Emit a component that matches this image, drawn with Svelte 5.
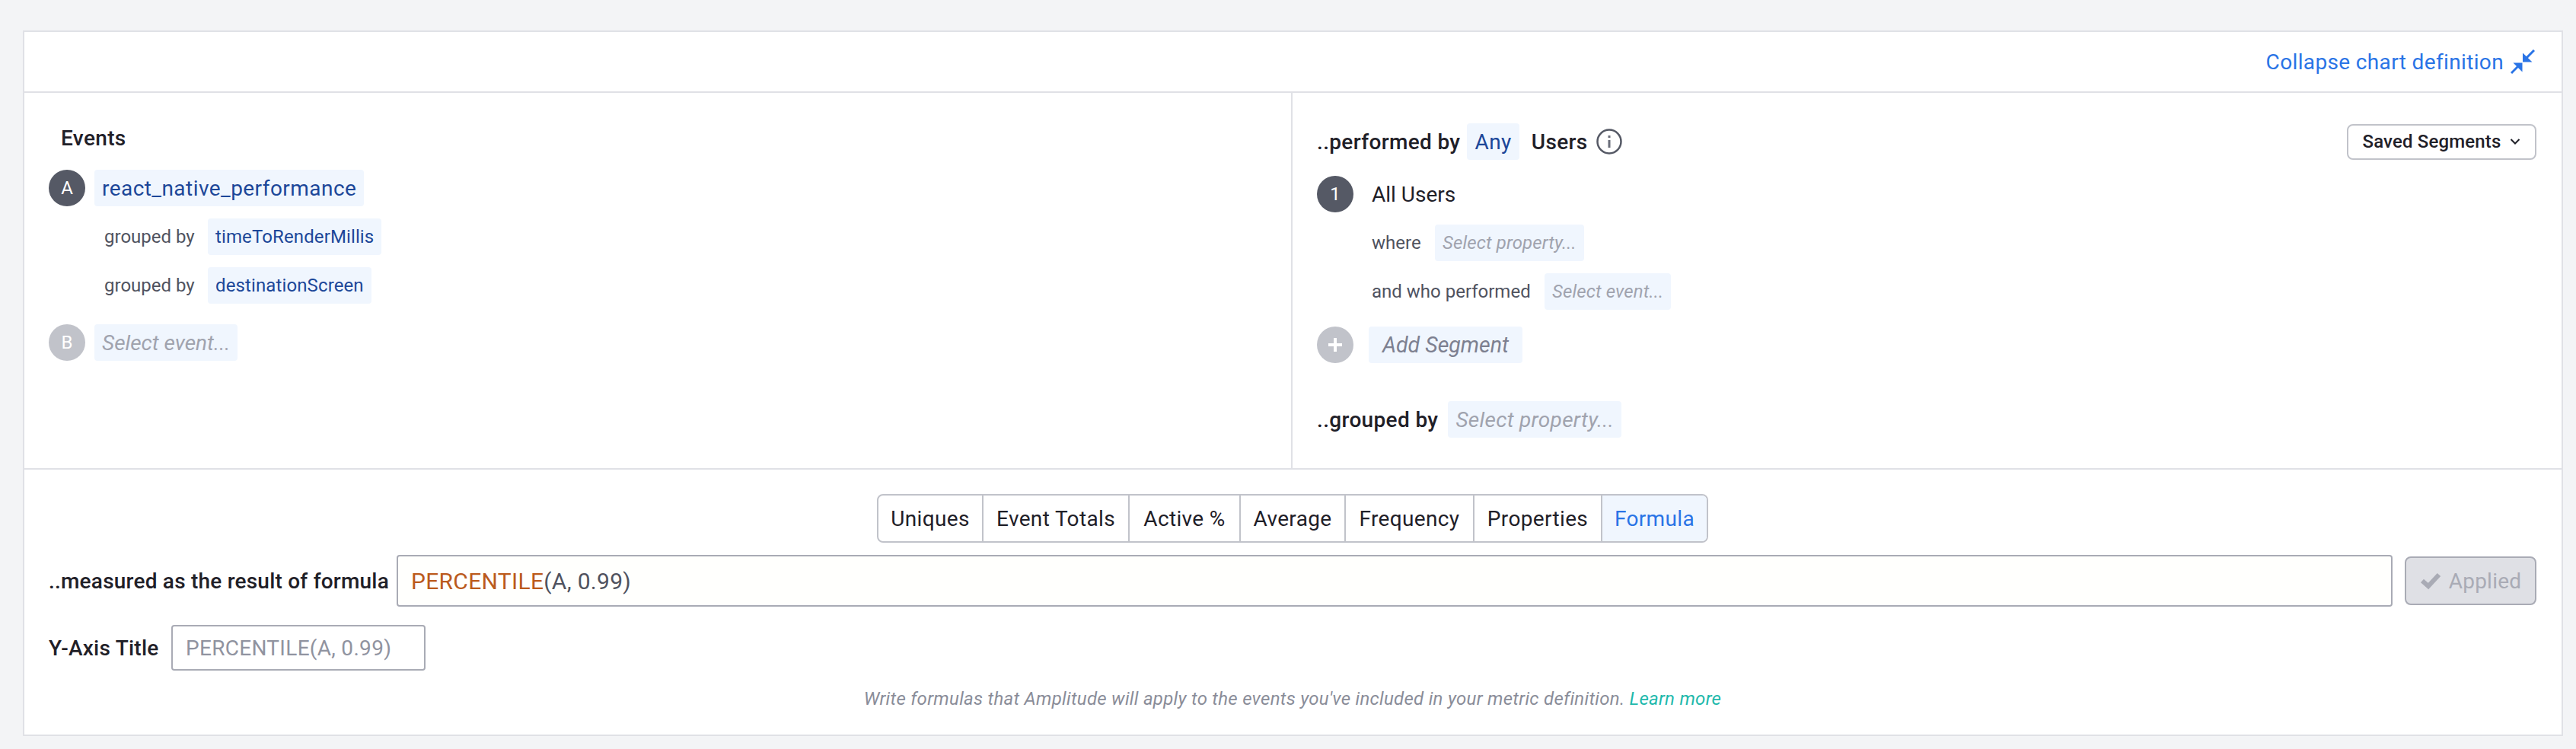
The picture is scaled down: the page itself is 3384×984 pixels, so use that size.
<script>
  const modes = ["Uniques", "Event Totals", "Active %", "Average", "Frequency", "Properties", "Formula"];
</script>

<div class="card">
  <div class="top-bar">
    <span class="collapse">Collapse chart definition</span>
    <svg class="collapse-icon" viewBox="0 0 32 32" width="32" height="32">
      <path d="M16 4.5 L28.5 16.5 H16 Z M3.5 17.5 H15.5 V29.5 Z" fill="#2a74e6" />
      <path d="M31 1 L21 11 M1 31 L11 21" fill="none" stroke="#2a74e6" stroke-width="3" />
    </svg>
  </div>

  <div class="builder">
    <div class="events">
      <div class="title">Events</div>
      <div class="row">
        <span class="badge">A</span>
        <span class="pill value big">react_native_performance</span>
      </div>
      <div class="row sub">
        <span class="muted">grouped by</span>
        <span class="pill value">timeToRenderMillis</span>
      </div>
      <div class="row sub">
        <span class="muted">grouped by</span>
        <span class="pill value">destinationScreen</span>
      </div>
      <div class="row next">
        <span class="badge off">B</span>
        <span class="pill holder big">Select event...</span>
      </div>
    </div>

    <div class="segments">
      <div class="seg-head">
        <span class="strong">..performed by</span>
        <span class="pill value big any">Any</span>
        <span class="strong users">Users</span>
        <svg class="info" viewBox="0 0 34 34" width="34" height="34">
          <circle cx="17" cy="17" r="15.5" fill="none" stroke="#555965" stroke-width="2.5" />
          <rect x="15.5" y="15" width="3" height="10" fill="#6b6e7a" />
          <rect x="15.5" y="9" width="3" height="3" fill="#6b6e7a" />
        </svg>
        <button class="saved">
          Saved Segments
          <svg viewBox="0 0 14 10" width="14" height="10">
            <path d="M1.5 2 L7 7.5 L12.5 2" fill="none" stroke="#1f2028" stroke-width="2" />
          </svg>
        </button>
      </div>
      <div class="seg-row first">
        <span class="badge wide">1</span>
        <span class="all">All Users</span>
      </div>
      <div class="seg-row indent">
        <span class="muted where">where</span>
        <span class="pill holder">Select property...</span>
      </div>
      <div class="seg-row indent">
        <span class="muted who">and who performed</span>
        <span class="pill holder">Select event...</span>
      </div>
      <div class="seg-row add">
        <span class="badge wide off">
          <svg viewBox="0 0 22 22" width="22" height="22">
            <path d="M11 2 V20 M2 11 H20" stroke="#fff" stroke-width="4" />
          </svg>
        </span>
        <span class="pill add-seg">Add Segment</span>
      </div>
      <div class="seg-row group">
        <span class="strong">..grouped by</span>
        <span class="pill holder big">Select property...</span>
      </div>
    </div>
  </div>

  <div class="measure">
    <div class="modes">
      {#each modes as mode}
        <div class="mode" class:active={mode === "Formula"}>{mode}</div>
      {/each}
    </div>

    <div class="formula-row">
      <span class="strong label">..measured as the result of formula</span>
      <div class="input formula"><span class="fn">PERCENTILE</span>(A, 0.99)</div>
      <button class="applied">
        <svg viewBox="0 0 28 24" width="28" height="24">
          <path d="M3 12 L11 19 L25 4" fill="none" stroke="#a9abb5" stroke-width="6" />
        </svg>
        Applied
      </button>
    </div>

    <div class="axis-row">
      <span class="strong label">Y-Axis Title</span>
      <div class="input axis">PERCENTILE(A, 0.99)</div>
    </div>

    <div class="help">
      Write formulas that Amplitude will apply to the events you've included in your metric definition.
      <span class="learn">Learn more</span>
    </div>
  </div>
</div>

<style>
  :global(body) {
    margin: 0;
    background: #f3f4f6;
  }

  .card {
    box-sizing: border-box;
    margin: 40px 17px 0 30px;
    height: 927px;
    background: #fff;
    border: 2px solid #e0e1e6;
    font-family: "Roboto", "Liberation Sans", sans-serif;
    font-size: 26px;
    color: #1f2028;
  }

  .top-bar {
    box-sizing: border-box;
    height: 80px;
    border-bottom: 2px solid #e0e1e6;
    display: flex;
    align-items: center;
    justify-content: flex-end;
    gap: 9px;
    padding-right: 35px;
  }

  .collapse {
    font-size: 28px;
    letter-spacing: 0.36px;
    color: #2a74e6;
  }

  .builder {
    display: flex;
    height: 493px;
    border-bottom: 2px solid #e0e1e6;
  }

  .events {
    box-sizing: border-box;
    width: 1666px;
    padding: 36px 0 0 32px;
    border-right: 2px solid #e0e1e6;
  }

  .title {
    height: 48px;
    line-height: 48px;
    margin: 0 0 17px 16px;
    font-weight: 500;
    font-size: 28px;
    letter-spacing: 0.35px;
  }

  .row {
    display: flex;
    align-items: center;
    height: 48px;
    margin-bottom: 16px;
  }

  .row.sub {
    padding-left: 73px;
  }

  .row.sub .muted {
    width: 136px;
    margin-right: 0;
  }

  .row.next {
    margin-top: 27px;
  }

  .badge {
    flex: none;
    width: 48px;
    height: 48px;
    border-radius: 50%;
    background: #555965;
    color: #fff;
    display: flex;
    align-items: center;
    justify-content: center;
    font-size: 24px;
    margin-right: 12px;
  }

  .badge.off {
    background: #c1c3ca;
  }

  .pill {
    box-sizing: border-box;
    display: flex;
    align-items: center;
    height: 100%;
    padding: 0 10px;
    background: #f0f6fe;
    border-radius: 4px;
    font-size: 24px;
    letter-spacing: 0.12px;
  }

  .pill.big {
    font-size: 28px;
    letter-spacing: 0;
  }

  .pill.value.big {
    letter-spacing: 0.45px;
  }

  .value {
    color: #1c4799;
  }

  .holder {
    color: #a0a3ae;
    font-style: italic;
  }

  .muted {
    color: #50535f;
    font-size: 24px;
  }

  .strong {
    font-weight: 500;
    font-size: 28px;
    letter-spacing: 0.35px;
  }

  .segments {
    flex: 1;
    box-sizing: border-box;
    padding: 40px 33px 0 32px;
  }

  .seg-head {
    display: flex;
    align-items: center;
    height: 48px;
  }

  .any {
    margin: 0 16px 0 9px;
  }

  .info {
    margin-left: 11px;
  }

  .saved {
    box-sizing: border-box;
    margin-left: auto;
    width: 249px;
    height: 47px;
    display: flex;
    align-items: center;
    justify-content: center;
    gap: 12px;
    background: #fff;
    border: 2px solid #c1c3ca;
    border-radius: 8px;
    font: 500 24px "Roboto", sans-serif;
    letter-spacing: 0.15px;
    color: #1f2028;
  }

  .seg-row {
    display: flex;
    align-items: center;
    height: 48px;
    margin-top: 16px;
  }

  .seg-row.first {
    margin-top: 21px;
  }

  .seg-row.indent {
    padding-left: 72px;
  }

  .seg-row.add {
    margin-top: 22px;
  }

  .seg-row.group {
    margin-top: 50px;
  }

  .group .strong {
    margin-right: 13px;
  }

  .group .pill {
    letter-spacing: 0.3px;
  }

  .badge.wide {
    margin-right: 20px;
  }

  .all {
    margin-left: 4px;
    font-size: 28px;
  }

  .where {
    width: 83px;
  }

  .who {
    width: 227px;
  }

  .pill.add-seg {
    padding: 0 18px;
    font-size: 28.5px;
    font-style: italic;
    letter-spacing: 0;
    color: #7d8090;
  }

  .measure {
    padding: 32px 33px 0 32px;
  }

  .modes {
    box-sizing: border-box;
    width: 1092px;
    height: 64px;
    margin: 0 auto;
    display: grid;
    grid-template-columns: 138px 192px 146px 138px 169px 168px 1fr;
    border: 2px solid #c1c3ca;
    border-radius: 8px;
    overflow: hidden;
  }

  .mode {
    display: flex;
    align-items: center;
    justify-content: center;
    font-size: 28px;
    letter-spacing: 0.35px;
    border-right: 2px solid #c1c3ca;
  }

  .mode:last-child {
    border-right: none;
  }

  .mode.active {
    background: #f0f6fe;
    color: #2a74e6;
  }

  .formula-row {
    display: flex;
    align-items: center;
    margin-top: 16px;
  }

  .formula-row .label {
    width: 457px;
    flex: none;
    letter-spacing: 0.22px;
  }

  .input {
    box-sizing: border-box;
    display: flex;
    align-items: center;
    border: 2px solid #a9abb5;
    border-radius: 4px;
    font-size: 28px;
    padding-left: 17px;
    color: #50535f;
  }

  .formula {
    flex: 1;
    height: 68px;
    font-size: 30px;
    letter-spacing: 0.3px;
    background: #fffffd;
  }

  .fn {
    color: #bb5a1c;
  }

  .applied {
    box-sizing: border-box;
    margin-left: 16px;
    width: 173px;
    height: 64px;
    display: flex;
    align-items: center;
    justify-content: center;
    gap: 10px;
    background: #dfe0e5;
    border: 2px solid #a9abb5;
    border-radius: 8px;
    font: 28px "Roboto", sans-serif;
    letter-spacing: 0.2px;
    color: #a9abb5;
  }

  .axis-row {
    display: flex;
    align-items: center;
    margin-top: 24px;
  }

  .axis-row .label {
    width: 161px;
    flex: none;
    letter-spacing: 0.25px;
  }

  .axis {
    width: 334px;
    height: 60px;
    letter-spacing: 0.3px;
    color: #9093a0;
  }

  .help {
    margin-top: 22px;
    text-align: center;
    font-size: 24px;
    line-height: 30px;
    letter-spacing: 0.28px;
    font-style: italic;
    color: #8a8d99;
  }

  .learn {
    color: #1fb9ac;
  }
</style>
